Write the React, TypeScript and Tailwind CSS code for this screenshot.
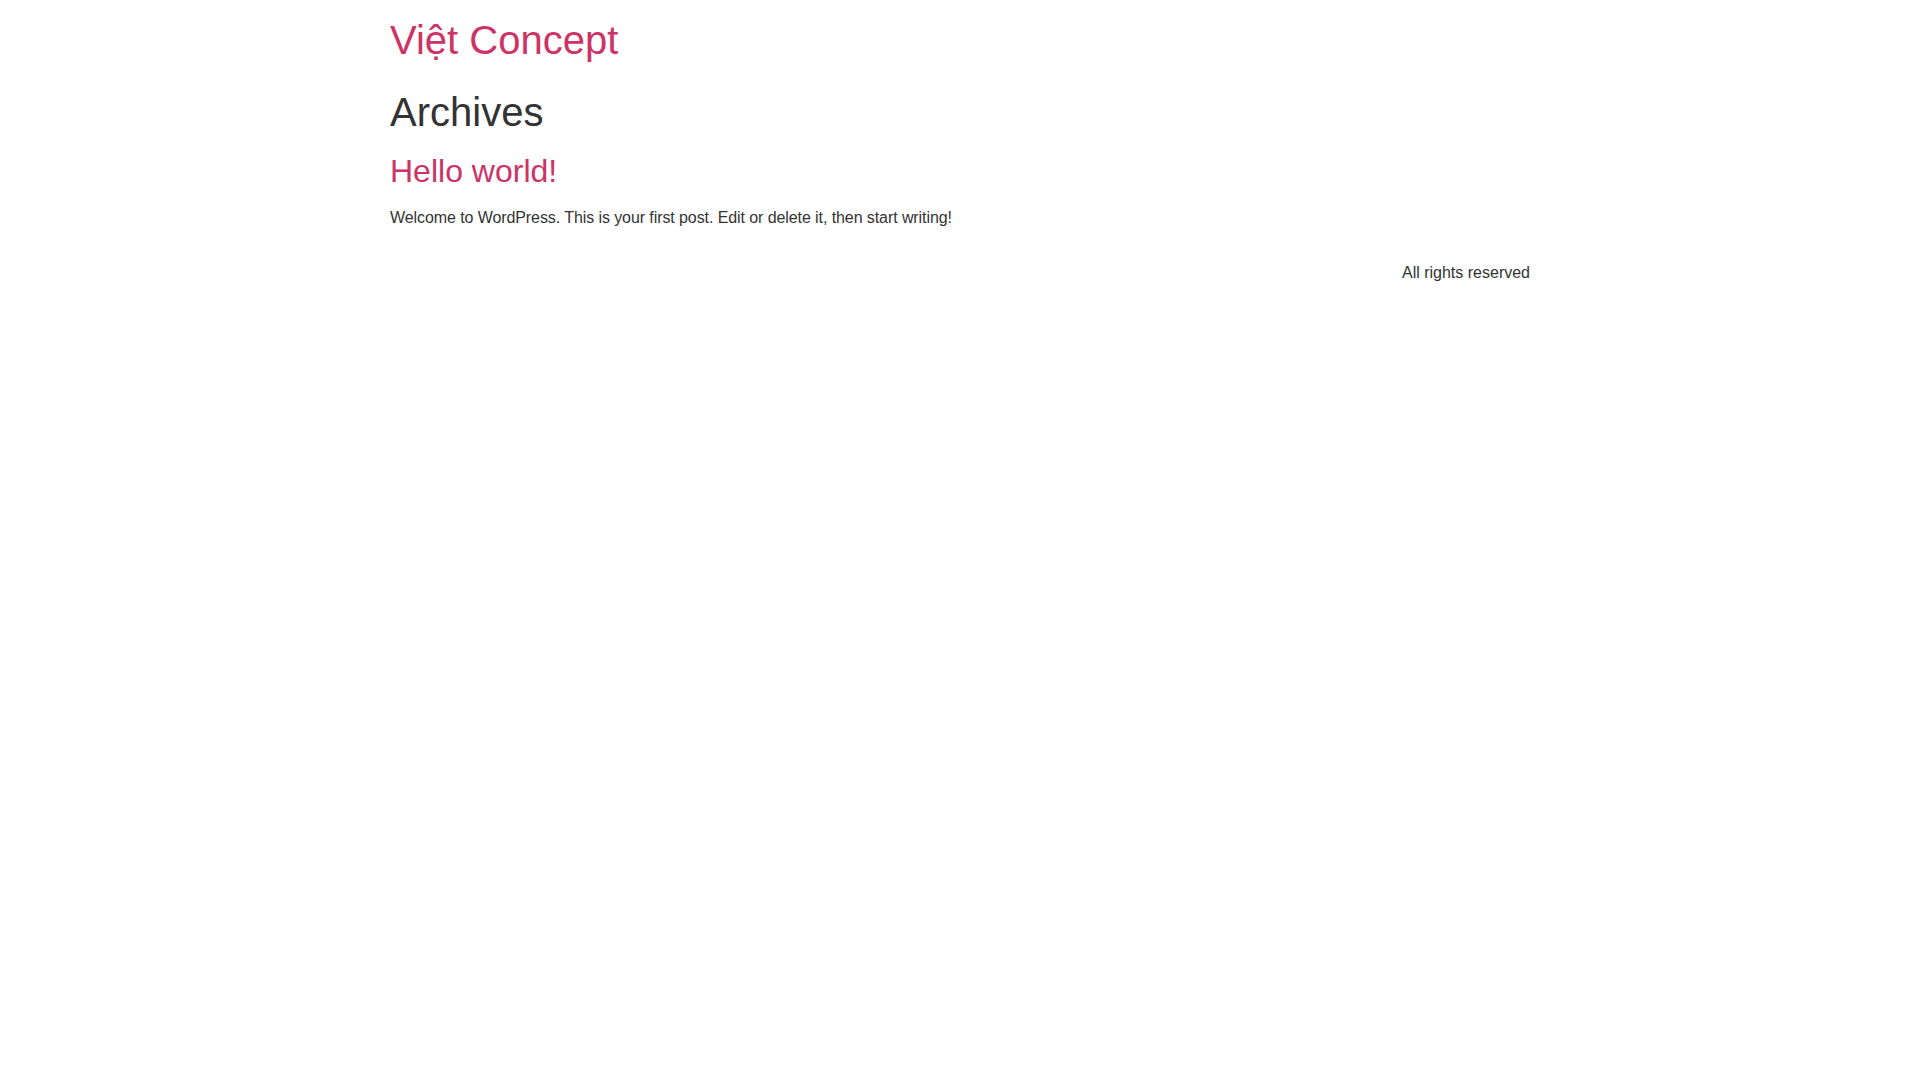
export default function App() {
  return (
    <div className="min-h-screen bg-white text-[#333] font-['Liberation_Sans',Arial,sans-serif] text-base leading-normal">
      <header className="mx-auto max-w-[1140px] pt-4">
        <h1 className="text-[40px] leading-[48px] font-medium">
          <a href="#" className="text-[#c36]">Việt Concept</a>
        </h1>
      </header>
      <main className="mx-auto max-w-[1140px]">
        <h1 className="mt-6 text-[40px] leading-[48px] font-medium text-[#333]">Archives</h1>
        <article className="mt-4">
          <h2 className="text-[32px] leading-[38.4px] font-medium">
            <a href="#" className="text-[#c36]">Hello world!</a>
          </h2>
          <p className="mt-4 tracking-[-0.085px]">
            Welcome to WordPress. This is your first post. Edit or delete it, then start writing!
          </p>
        </article>
      </main>
      <footer className="mx-auto max-w-[1140px] mt-[31px] flex justify-end">
        <p>All rights reserved</p>
      </footer>
    </div>
  );
}
